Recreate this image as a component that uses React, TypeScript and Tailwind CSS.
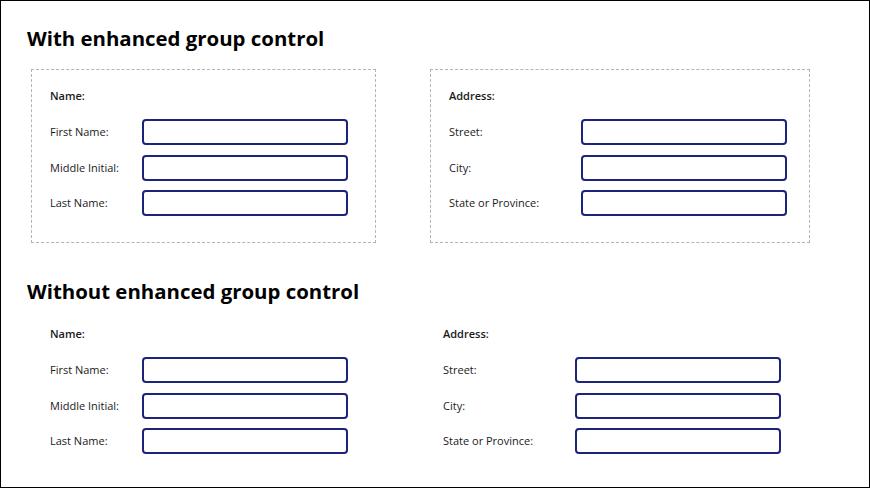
const nameFields = ["First Name:", "Middle Initial:", "Last Name:"];
const addressFields = ["Street:", "City:", "State or Province:"];

function FieldGroup({
  title,
  fields,
  labelWidth,
}: {
  title: string;
  fields: string[];
  labelWidth: string;
}) {
  return (
    <div>
      <p className="h-[16px] text-[11px] font-semibold leading-[16px] text-[#1a1a1a]">{title}</p>
      <div className="mt-[15px] flex flex-col gap-[9.5px]">
        {fields.map((label) => (
          <div key={label} className="flex items-center">
            <span className={`${labelWidth} shrink-0 text-[11px] leading-[16px] text-[#1a1a1a]`}>{label}</span>
            <input
              type="text"
              className="h-[26px] w-[206px] rounded-[4px] border-2 border-[#1b237a] bg-white outline-none"
            />
          </div>
        ))}
      </div>
    </div>
  );
}

export default function App() {
  return (
    <div
      className="h-[488px] w-[870px] overflow-hidden border border-black bg-white"
      style={{ fontFamily: '"Open Sans", "Liberation Sans", sans-serif' }}
    >
      <h2 className="ml-[26px] mt-[24px] text-[20.4px] font-bold leading-[27px] text-black">
        With enhanced group control
      </h2>
      <div className="mt-[17px] flex gap-[54px] pl-[30px]">
        <div className="h-[174px] w-[345px] border border-dashed border-[#b4b4b4] pl-[18px] pt-[18px]">
          <FieldGroup title="Name:" fields={nameFields} labelWidth="w-[92px]" />
        </div>
        <div className="h-[174px] w-[380px] border border-dashed border-[#b4b4b4] pl-[18px] pt-[18px]">
          <FieldGroup title="Address:" fields={addressFields} labelWidth="w-[132px]" />
        </div>
      </div>
      <h2 className="ml-[26px] mt-[35px] text-[20.4px] font-bold leading-[27px] text-black">
        Without enhanced group control
      </h2>
      <div className="mt-[21px] flex pl-[49px]">
        <div className="w-[393px]">
          <FieldGroup title="Name:" fields={nameFields} labelWidth="w-[92px]" />
        </div>
        <div>
          <FieldGroup title="Address:" fields={addressFields} labelWidth="w-[132px]" />
        </div>
      </div>
    </div>
  );
}
